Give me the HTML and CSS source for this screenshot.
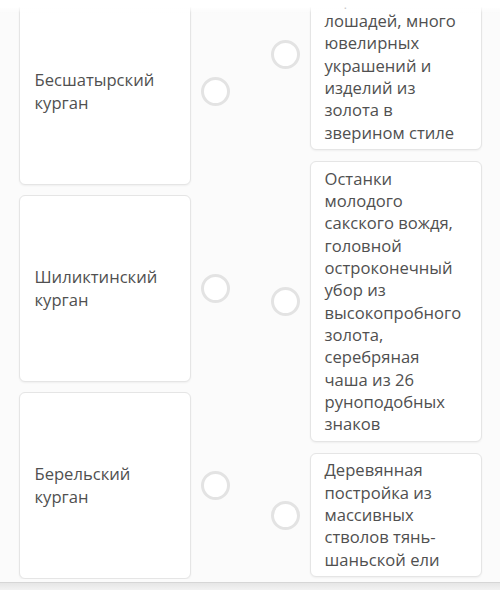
FILE: index.html
```html
<!DOCTYPE html>
<html lang="ru">
<head>
    <meta charset="UTF-8">
    <meta name="viewport" content="width=device-width, initial-scale=1.0">
    <title>Курганы</title>
    <link rel="stylesheet" href="styles.css">
</head>
<body>
    <div class="fade-top"></div>
    <div class="match">
        <!-- левая колонка: курганы -->
        <ul class="col col-left">
            <li class="row">
                <div class="card card-name">Бесшатырский курган</div>
                <span class="radio"></span>
            </li>
            <li class="row">
                <div class="card card-name">Шиликтинский курган</div>
                <span class="radio"></span>
            </li>
            <li class="row">
                <div class="card card-name">Берельский курган</div>
                <span class="radio"></span>
            </li>
        </ul>
        <!-- правая колонка: описания -->
        <ul class="col col-right">
            <li class="row">
                <span class="radio"></span>
                <div class="card card-desc">Останки 13 верховых лошадей, много ювелирных украшений и изделий из золота в зверином стиле</div>
            </li>
            <li class="row">
                <span class="radio"></span>
                <div class="card card-desc">Останки молодого сакского вождя, головной остроконечный убор из высокопробного золота, серебряная чаша из 26 руноподобных знаков</div>
            </li>
            <li class="row">
                <span class="radio"></span>
                <div class="card card-desc">Деревянная постройка из массивных стволов тянь-шаньской ели</div>
            </li>
        </ul>
    </div>
    <div class="bottom-bar"></div>
</body>
</html>
```

FILE: styles.css
```css
*{
    padding: 0;
    margin: 0;
    box-sizing: border-box;
}
ul,ol{
    list-style: none;
}
body{
    background-color: #fbfbfb;
    font-family: "Open Sans", "Noto Sans", sans-serif;
    font-size: 16.6px;
    line-height: 22.3px;
    color: #505050;
    overflow: hidden;
}
.match{
    display: flex;
    padding-left: 19px;
    gap: 41px;
}
.col{
    display: flex;
    flex-direction: column;
}
.col-left{
    margin-top: -2px;
    gap: 10px;
}
.col-right{
    margin-top: -41px;
    gap: 11px;
}
.row{
    display: flex;
    align-items: center;
    gap: 10px;
}
.card{
    width: 172px;
    background-color: #fff;
    border: 1.5px solid #e5e5e5;
    border-radius: 6px;
    box-shadow: 0 1px 2px rgba(0, 0, 0, .05);
}
.card-name{
    min-height: 187px;
    display: flex;
    align-items: center;
    padding: 0 14.5px;
}
.card-desc{
    padding: 5.5px 16px 5.5px 13.5px;
}
.radio{
    flex: none;
    width: 29px;
    height: 29px;
    border: 3px solid #e3e3e3;
    border-radius: 50%;
    background-color: #fff;
}
/* размытие сверху и полоса снизу лежат поверх контента */
.fade-top{
    position: fixed;
    left: 0;
    top: 0;
    width: 100%;
    height: 13px;
    background: linear-gradient(#fff 50%, rgba(255, 255, 255, 0));
    z-index: 2;
}
.bottom-bar{
    position: fixed;
    left: 0;
    bottom: 0;
    width: 100%;
    height: 8px;
    border-top: 1px solid #d6d6d6;
    background: linear-gradient(#e6e6e6, #f2f2f2);
    z-index: 2;
}
```
